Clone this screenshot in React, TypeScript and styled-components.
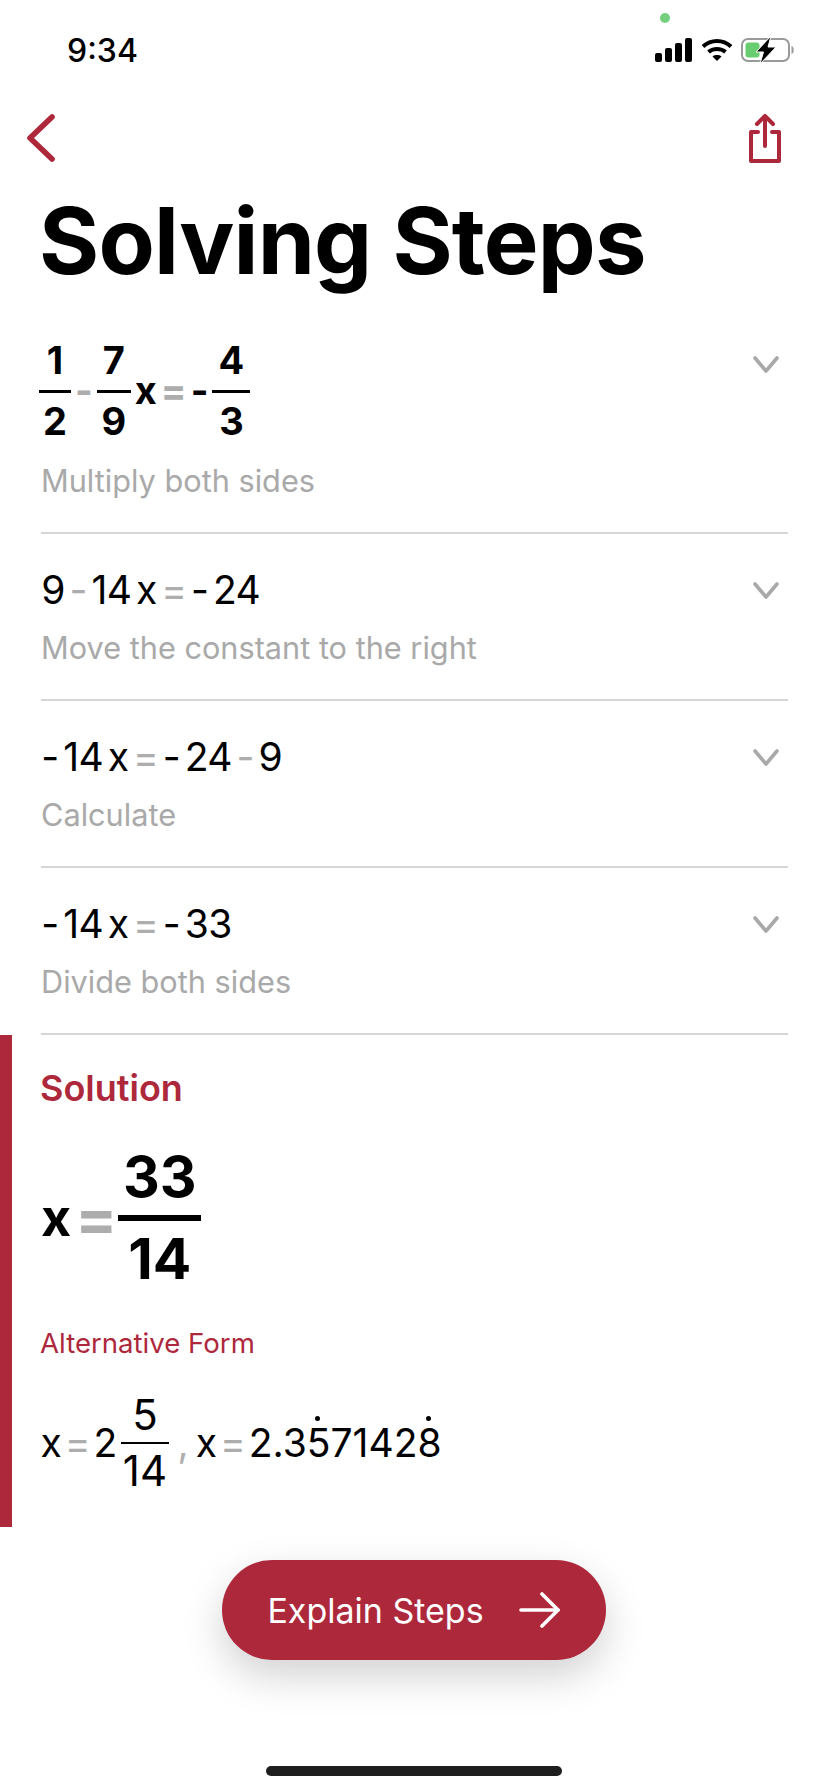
import React from 'react';
import styled, { createGlobalStyle } from 'styled-components';

const RED = '#ae283c';

const GlobalStyle = createGlobalStyle`
  html, body {
    margin: 0;
    padding: 0;
    background: #fff;
  }
  * {
    box-sizing: border-box;
  }
`;

const steps = [
  { expr: ['9', '-', '14', 'x', '=', '-', '24'], hint: 'Move the constant to the right' },
  { expr: ['-', '14', 'x', '=', '-', '24', '-', '9'], hint: 'Calculate' },
  { expr: ['-', '14', 'x', '=', '-', '33'], hint: 'Divide both sides' },
];

const Term = styled.span`
  padding: 0 1px;
`;

const Grey = styled.span`
  color: #adadad;
  padding: 0 1px;
`;

const Chevron: React.FC<{ top: number }> = ({ top }) => (
  <ChevronSvg $top={top} viewBox="0 0 28 20" fill="none" stroke="#a9a9a9" strokeWidth="3.6" strokeLinecap="round" strokeLinejoin="round">
    <path d="M3 3 L14 16 L25 3" />
  </ChevronSvg>
);

const App: React.FC = () => {
  return (
    <Page>
      <GlobalStyle />
      <StatusBar>
        <Time>9:34</Time>
        <GreenDot />
        <StatusIcons>
          <svg width="38" height="24" viewBox="0 0 38 24" fill="#000">
            <rect x="0" y="15" width="7" height="9" rx="2" />
            <rect x="10" y="10" width="7" height="14" rx="2" />
            <rect x="20" y="5" width="7" height="19" rx="2" />
            <rect x="30" y="0" width="7" height="24" rx="2" />
          </svg>
          <svg width="32" height="24" viewBox="0 0 32 24" fill="none" stroke="#000" strokeWidth="4">
            <path d="M2 8.5 C10 1 22 1 30 8.5" />
            <path d="M7.5 14 C12 10 20 10 24.5 14" />
            <path d="M16 23 L11.5 18.5 C14 16.6 18 16.6 20.5 18.5 Z" fill="#000" stroke="none" />
          </svg>
          <svg width="54" height="28" viewBox="0 0 54 28" fill="none">
            <rect x="1" y="3" width="47" height="22" rx="6" stroke="#9a9a9a" strokeWidth="2" />
            <rect x="4.5" y="6.5" width="14" height="15" rx="3" fill="#67cd6e" />
            <path d="M50.5 10 C53.5 11 53.5 17 50.5 18 Z" fill="#9a9a9a" />
            <path d="M30 0 L15 16 L22.5 16 L19 28 L35 11 L27 11 Z" fill="#000" stroke="#fff" strokeWidth="1" />
          </svg>
        </StatusIcons>
      </StatusBar>

      <NavRow>
        <svg width="30" height="48" viewBox="0 0 30 48" fill="none" stroke={RED} strokeWidth="5.6" strokeLinecap="round" strokeLinejoin="round">
          <path d="M26 3 L4 24 L26 45" />
        </svg>
        <svg width="34" height="50" viewBox="0 0 34 50" fill="none" stroke={RED} strokeWidth="4" strokeLinecap="round" strokeLinejoin="round">
          <path d="M10 18 H3 V47 H31 V18 H24" />
          <path d="M17 32 V3" />
          <path d="M9 10 L17 2 L25 10" />
        </svg>
      </NavRow>

      <Title>Solving Steps</Title>

      <FirstStep>
        <StepBody>
          <FractionLine $size={38} $weight={700}>
            <Fraction $barWidth={32} $bar={3} $pad={6}>
              <span>1</span>
              <span>2</span>
            </Fraction>
            <Grey>-</Grey>
            <Fraction $barWidth={34} $bar={3} $pad={6}>
              <span>7</span>
              <span>9</span>
            </Fraction>
            <Term>x</Term>
            <Grey>=</Grey>
            <Term>-</Term>
            <Fraction $barWidth={38} $bar={3} $pad={6}>
              <span>4</span>
              <span>3</span>
            </Fraction>
          </FractionLine>
          <FirstHint>Multiply both sides</FirstHint>
        </StepBody>
        <Chevron top={21} />
      </FirstStep>

      {steps.map((step) => (
        <Step key={step.hint}>
          <StepBody>
            <StepLine $size={39} $weight={400}>
              {step.expr.map((part, i) =>
                part === '=' || (part === '-' && i > 0 && step.expr[i - 1] !== '=') ? (
                  <Grey key={i}>{part}</Grey>
                ) : (
                  <Term key={i}>{part}</Term>
                ),
              )}
            </StepLine>
            <Hint>{step.hint}</Hint>
          </StepBody>
          <Chevron top={14} />
        </Step>
      ))}

      <Solution>
        <SolutionLabel>Solution</SolutionLabel>
        <AnswerLine $size={52} $weight={700}>
          <Term>x</Term>
          <AnswerEquals>=</AnswerEquals>
          <Fraction $barWidth={83} $bar={6} $pad={4} $size={57}>
            <span>33</span>
            <span>14</span>
          </Fraction>
        </AnswerLine>
        <AltLabel>Alternative Form</AltLabel>
        <AltLine $size={39} $weight={400}>
          <Term>x</Term>
          <Grey>=</Grey>
          <Term>2</Term>
          <Fraction $barWidth={48} $bar={2} $pad={2} $size={42}>
            <span>5</span>
            <span>14</span>
          </Fraction>
          <Comma>,</Comma>
          <Term>x</Term>
          <Grey>=</Grey>
          <Term>
            2.3<Dotted>5</Dotted>7142<Dotted>8</Dotted>
          </Term>
        </AltLine>
      </Solution>

      <ButtonRow>
        <ExplainButton>
          Explain Steps
          <svg width="42" height="36" viewBox="0 0 42 36" fill="none" stroke="#fff" strokeWidth="3.6" strokeLinecap="round" strokeLinejoin="round">
            <path d="M2 18 H39" />
            <path d="M23 2 L39 18 L23 34" />
          </svg>
        </ExplainButton>
      </ButtonRow>
      <HomeIndicator />
    </Page>
  );
};

const Page = styled.div`
  width: 828px;
  height: 1792px;
  overflow: hidden;
  background: #fff;
  font-family: Inter, 'Liberation Sans', sans-serif;
  color: #000;
`;

const StatusBar = styled.div`
  position: relative;
  height: 100px;
  padding: 0 33px 0 67px;
  display: flex;
  justify-content: space-between;
  align-items: center;
`;

const Time = styled.div`
  font-size: 32px;
  font-weight: 500;
`;

const GreenDot = styled.div`
  position: absolute;
  left: 660px;
  top: 13px;
  width: 10px;
  height: 10px;
  border-radius: 50%;
  background: #74d07d;
`;

const StatusIcons = styled.div`
  display: flex;
  align-items: center;
  gap: 8px;
`;

const NavRow = styled.div`
  height: 82px;
  padding: 14px 46px 0 26px;
  display: flex;
  justify-content: space-between;
  align-items: flex-start;
`;

const Title = styled.h1`
  margin: 0;
  padding-left: 39px;
  height: 152px;
  font-size: 92px;
  line-height: 118px;
  font-weight: 700;
  letter-spacing: -0.8px;
`;

const Step = styled.div`
  margin: 0 40px 0 41px;
  height: 167px;
  padding-top: 33px;
  border-bottom: 2px solid #d6d6d6;
  display: flex;
  justify-content: space-between;
  align-items: flex-start;
`;

const FirstStep = styled(Step)`
  height: 200px;
  padding-top: 0;
`;

const StepBody = styled.div`
  display: flex;
  flex-direction: column;
`;

const ChevronSvg = styled.svg<{ $top: number }>`
  width: 28px;
  height: 20px;
  margin: ${(p) => p.$top}px 8px 0 0;
`;

const MathLine = styled.div<{ $size: number; $weight: number }>`
  display: flex;
  align-items: center;
  font-size: ${(p) => p.$size}px;
  font-weight: ${(p) => p.$weight};
  line-height: 1.2;
`;

const FractionLine = styled(MathLine)`
  margin: 4px 0 0 -4px;

  & > ${Term}, & > ${Grey} {
    padding: 0 2px;
  }
`;

const StepLine = styled(MathLine)`
  margin-left: -2px;
  letter-spacing: -0.6px;

  & > span {
    padding: 0 2.3px;
  }
`;

const Fraction = styled.span<{ $barWidth: number; $bar: number; $pad: number; $size?: number }>`
  display: inline-flex;
  flex-direction: column;
  align-items: center;
  width: ${(p) => p.$barWidth}px;
  margin: 0 2px;
  font-size: ${(p) => (p.$size ? `${p.$size}px` : 'inherit')};

  & > span:first-child {
    width: 100%;
    text-align: center;
    padding-bottom: ${(p) => p.$pad}px;
    border-bottom: ${(p) => p.$bar}px solid #000;
  }
  & > span:last-child {
    padding-top: ${(p) => p.$pad}px;
  }
`;

const Hint = styled.div`
  font-size: 30.7px;
  line-height: 40px;
  color: #a9a9a9;
  margin-top: 14px;
`;

const FirstHint = styled(Hint)`
  margin-top: 17px;
`;

const Solution = styled.section`
  height: 492px;
  border-left: 12px solid ${RED};
  padding: 33px 0 0 28px;
`;

const SolutionLabel = styled.div`
  font-size: 36px;
  line-height: 40px;
  font-weight: 600;
  color: ${RED};
`;

const AnswerLine = styled(MathLine)`
  margin-top: 35px;
`;

const AnswerEquals = styled(Grey)`
  font-size: 62px;
  padding: 0 0 0 3px;
  margin-right: -1px;
`;

const AltLabel = styled.div`
  margin-top: 32px;
  font-size: 27.6px;
  line-height: 34px;
  color: ${RED};
`;

const AltLine = styled(MathLine)`
  margin: 30px 0 0 -1px;

  & > ${Term}, & > ${Grey} {
    padding: 0 1.5px;
  }
`;

const Comma = styled(Grey)`
  && {
    padding: 0 5.5px 0 6.5px;
  }
`;

const Dotted = styled.span`
  position: relative;

  &::before {
    content: '';
    position: absolute;
    left: 50%;
    top: -3px;
    width: 5px;
    height: 5px;
    margin-left: -3.5px;
    border-radius: 50%;
    background: #000;
  }
`;

const ButtonRow = styled.div`
  margin-top: 33px;
  display: flex;
  justify-content: center;
`;

const ExplainButton = styled.button`
  width: 384px;
  height: 100px;
  border: none;
  border-radius: 50px;
  background: ${RED};
  color: #fff;
  font-family: inherit;
  font-size: 34px;
  display: flex;
  align-items: center;
  justify-content: center;
  gap: 35px;
  box-shadow: 0 16px 40px rgba(0, 0, 0, 0.18);
`;

const HomeIndicator = styled.div`
  width: 296px;
  height: 10px;
  margin: 106px auto 0;
  border-radius: 5px;
  background: #1e1e1e;
`;

export default App;
